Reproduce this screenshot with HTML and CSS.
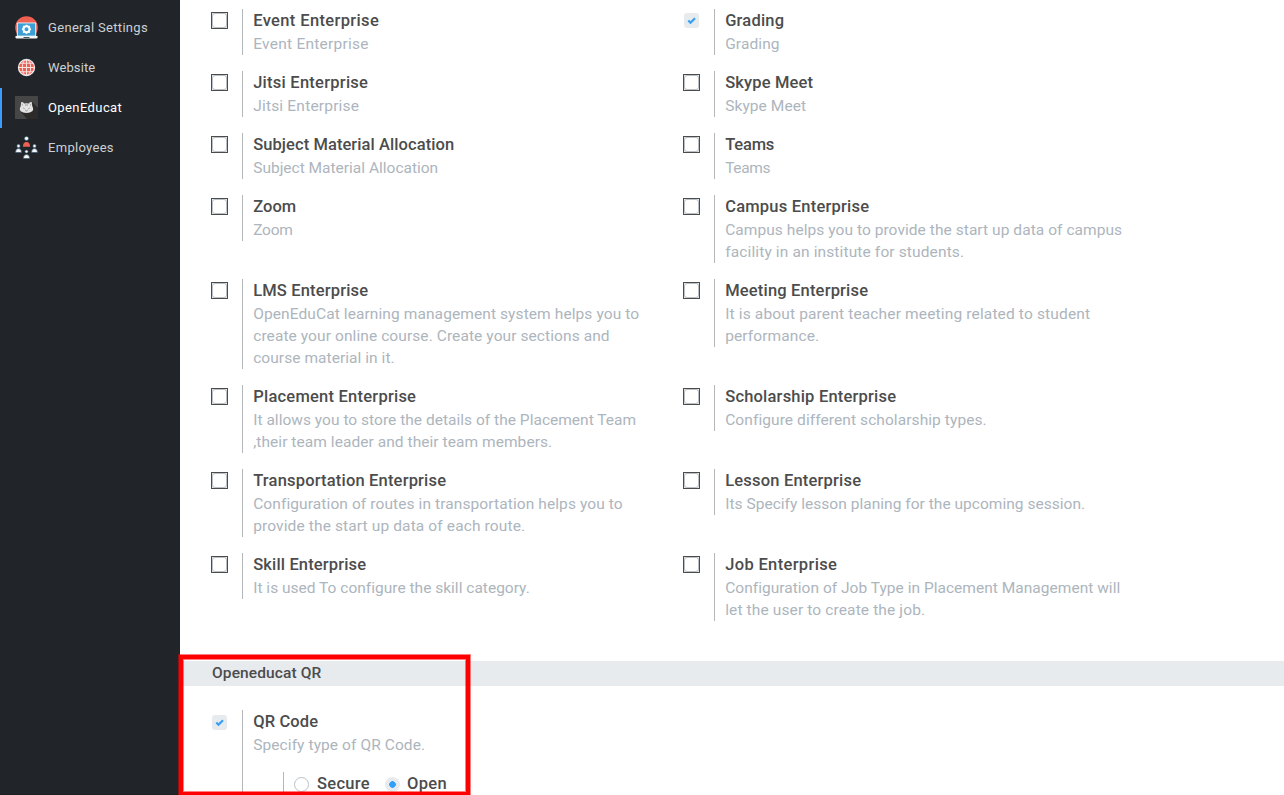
FILE: index.html
```
<!DOCTYPE html>
<html lang="en">
<head>
<meta charset="utf-8">
<title>Settings</title>
<link rel="stylesheet" href="styles.css">
</head>
<body>
<div class="app">
  <nav class="sidebar">
    <a class="tab"><svg class="icon" viewBox="0 0 23 23"><circle cx="11.5" cy="11.5" r="11.3" fill="#ef5f52"/><path d="M0 18h23v5H0z" fill="#212529"/><rect x="1.8" y="6.4" width="19.4" height="14" rx=".8" fill="#e9f1f5"/><rect x="2.8" y="7.4" width="17.4" height="12.2" fill="#3a9fd4"/><circle cx="11.5" cy="13.3" r="3" fill="none" stroke="#fff" stroke-width="2"/><path d="M11.5 8.7v2M11.5 15.9v2M6.9 13.3h2M14.1 13.3h2M8.2 10l1.4 1.4M13.4 15.2l1.4 1.4M8.2 16.6l1.4-1.4M13.4 11.4l1.4-1.4" stroke="#fff" stroke-width="1.6"/><path d="M.5 20h22v1.2q0 1.3-1.4 1.3H1.9Q.5 22.5 .5 21.2z" fill="#f5f7f8"/><path d="M8.5 21.5h6" stroke="#44586a"/></svg><span class="tab-general">General Settings</span></a>
    <a class="tab"><svg class="icon" viewBox="0 0 23 23"><circle cx="11.5" cy="11.5" r="9.7" fill="#172a3a"/><circle cx="11.5" cy="11.5" r="8" fill="#ef5f52" stroke="#f6e9e7" stroke-width="1.3"/><g fill="none" stroke="#f8e3df" stroke-width="1"><ellipse cx="11.5" cy="11.5" rx="4.2" ry="8"/><path d="M11.5 3.5v16M3.5 11.5h16M4.8 7.2h13.4M4.8 15.8h13.4"/></g></svg><span class="tab-website">Website</span></a>
    <a class="tab active"><svg class="icon" viewBox="0 0 23 23"><path d="M0 0h23v23H0z" fill="#464646"/><path d="M17 6l6 6v11H12l-6-7z" fill="#2d2b2a"/><path d="M6.2 6.2q1.6-.4 2.9 1.3 2.4-.5 4.8 0 1.3-1.7 2.9-1.3l.5 4q1.8 3.2-.1 5-2 1.8-5.7 1.8t-5.7-1.8q-1.9-1.8-.1-5z" fill="#e4e4e4"/><path d="M7.2 7.7l.2 2M15.8 7.7l-.2 2M10.8 8v2M12.2 8v2" stroke="#999" stroke-width=".8"/><path d="M8.3 12l1.2.6M14.7 12l-1.2.6M10.3 14.2l1.2.8 1.2-.8" stroke="#777" stroke-width=".8" fill="none"/></svg><span class="tab-open">OpenEducat</span></a>
    <a class="tab"><svg class="icon" viewBox="0 0 23 23"><g stroke="#284b68" stroke-width=".6" fill="#f4f7f9"><circle cx="11.5" cy="2.5" r="2.1"/><circle cx="3.5" cy="10" r="1.7"/><circle cx="19.5" cy="10" r="1.7"/><circle cx="11.5" cy="15.5" r="1.6"/><path d="M.5 16.5q0-4 3-4t3 4zM16.5 16.5q0-4 3-4t3 4zM8.3 22.5q0-4 3.2-4t3.2 4z"/></g><path d="M7.9 10.8q0-4.9 3.6-4.9t3.6 4.9z" fill="#ef5f52"/></svg><span class="tab-emp">Employees</span></a>
  </nav>
  <main class="content">
    <div class="grid" id="settings"></div>
    <h2 class="section"><span class="fit" data-w="109.5">Openeducat QR</span></h2>
    <div class="setting qr">
      <div class="left"><i class="check on"><svg viewBox="0 0 15 15"><path d="M4.3 7.5l2.2 2.2L11 5.3" /></svg></i></div>
      <div class="right">
        <div class="title"><span class="fit" data-w="65">QR Code</span></div>
        <div class="desc"><span class="fit" data-w="172">Specify type of QR Code.</span></div>
        <div class="options"><i class="radio"></i><b class="fit" data-w="53">Secure</b><i class="radio on"></i><b class="fit" data-w="40">Open</b></div>
      </div>
    </div>
  </main>
  <div class="highlight"></div>
</div>
<script src="app.js"></script>
</body>
</html>
```
FILE: styles.css
```
*, *::before { box-sizing: border-box; }
body { margin: 0; background: #fff; font-family: Roboto, "Liberation Sans", sans-serif; }
.app { position: relative; display: flex; width: 1284px; height: 795px; overflow: hidden; }
.sidebar { width: 180px; flex: none; background: #212529; padding-top: 8px; border-bottom: 1px solid #1b1e22; }
.tab { display: flex; align-items: center; height: 40px; padding: 0 0 2px 15px; color: #cdd0d3; font-size: 13px; white-space: nowrap; }
.tab.active { padding-left: 13px; border-left: 2px solid #3a9cfb; color: #fff; }
.icon { width: 23px; height: 23px; margin-right: 10px; flex: none; }
.tab-general { letter-spacing: .32px; }
.tab-website { letter-spacing: .1px; }
.tab-open { letter-spacing: .4px; }
.tab-emp { letter-spacing: .3px; }
.content { flex: 1; min-width: 0; padding-top: 9px; }
.grid { display: grid; grid-template-columns: 472px 472px; row-gap: 16px; padding-left: 31px; align-items: start; }
.setting { display: flex; }
.left { width: 31px; flex: none; padding-top: 3px; }
.right { border-left: 1px solid #b4b7ba; padding-left: 10.2px; white-space: nowrap; }
.title { height: 24px; line-height: 24px; font-size: 16.5px; font-weight: 500; color: #4c4c4c; }
.desc { line-height: 22px; font-size: 15.5px; color: #adb5bd; }
.line { display: block; height: 22px; }
.fit { display: inline-block; }
.check { display: block; width: 17px; height: 17px; border: 1px solid #4c4c4c; background: #e4e8eb; }
.check::before { content: ""; display: block; width: 15px; height: 15px; border: 1px solid #b9c0c7; border-radius: 3px; background: #fff; }
.check.on { width: 15px; height: 15px; margin: 1px; border: 0; border-radius: 3px; background: #e7ebee; }
.check.on::before { display: none; }
.check svg { display: block; width: 15px; height: 15px; fill: none; stroke: #349ff7; stroke-width: 2.2; }
.section { height: 25px; margin: 40px 0 24px; padding-left: 32px; background: #e7ebee; color: #4c4c4c; font-size: 15.5px; line-height: 25px; font-weight: 500; }
.qr { padding-left: 31px; height: 100px; }
.qr .left { padding-top: 4px; }
.options { display: flex; align-items: flex-start; height: 40px; margin: 16px 0 0 29.8px; padding-left: 10px; border-left: 1px solid #b4b7ba; font-size: 16.5px; line-height: 24px; color: #4c4c4c; }
.options b { font-weight: 500; margin: 0 15px 0 8px; }
.options .on + b { margin-left: 7px; }
.radio { width: 15px; height: 15px; margin-top: 5px; border: 1px solid #b9c0c7; border-radius: 50%; flex: none; }
.radio.on { border: 0; background: radial-gradient(circle, #349ff7 3px, #e7ebee 3.6px); }
.highlight { position: absolute; left: 179px; top: 655px; width: 291px; height: 141px; border: 4px solid #f00; box-shadow: 0 0 0 1px rgba(255,0,0,.5), inset 0 0 0 1px rgba(255,0,0,.5); }
```
FILE: app.js
```
// Each entry: title, title width, description lines with their widths, enabled flag
const settings = [
  ["Event Enterprise", 126, [["Event Enterprise", 115.5]]],
  ["Grading", 59, [["Grading", 54.5]], true],
  ["Jitsi Enterprise", 115, [["Jitsi Enterprise", 106]]],
  ["Skype Meet", 88, [["Skype Meet", 81]]],
  ["Subject Material Allocation", 201, [["Subject Material Allocation", 185]]],
  ["Teams", 49, [["Teams", 45]]],
  ["Zoom", 43, [["Zoom", 39.5]]],
  ["Campus Enterprise", 144, [["Campus helps you to provide the start up data of campus", 397], ["facility in an institute for students.", 239]]],
  ["LMS Enterprise", 115, [["OpenEduCat learning management system helps you to", 386], ["create your online course. Create your sections and", 356.5], ["course material in it.", 141.5]]],
  ["Meeting Enterprise", 143, [["It is about parent teacher meeting related to student", 365], ["performance.", 94]]],
  ["Placement Enterprise", 163, [["It allows you to store the details of the Placement Team", 383], [",their team leader and their team members.", 299]]],
  ["Scholarship Enterprise", 171, [["Configure different scholarship types.", 261]]],
  ["Transportation Enterprise", 193, [["Configuration of routes in transportation helps you to", 369], ["provide the start up data of each route.", 272]]],
  ["Lesson Enterprise", 136, [["Its Specify lesson planing for the upcoming session.", 360]]],
  ["Skill Enterprise", 113, [["It is used To configure the skill category.", 276]]],
  ["Job Enterprise", 112, [["Configuration of Job Type in Placement Management will", 394.5], ["let the user to create the job.", 200]]]
];
const label = ([text, width]) => `<span class="fit" data-w="${width}">${text}</span>`;
const tick = '<svg viewBox="0 0 15 15"><path d="M4.3 7.5l2.2 2.2L11 5.3"/></svg>';
document.getElementById("settings").innerHTML = settings.map(([title, width, lines, on]) => `
  <div class="setting">
    <div class="left"><i class="check${on ? " on" : ""}">${on ? tick : ""}</i></div>
    <div class="right">
      <div class="title">${label([title, width])}</div>
      <div class="desc">${lines.map(l => `<span class="line">${label(l)}</span>`).join("")}</div>
    </div>
  </div>`).join("");

document.querySelectorAll(".fit").forEach(el => {
  const gap = (Number(el.dataset.w) - el.getBoundingClientRect().width) / el.textContent.length;
  el.style.letterSpacing = gap + "px";
});
```
